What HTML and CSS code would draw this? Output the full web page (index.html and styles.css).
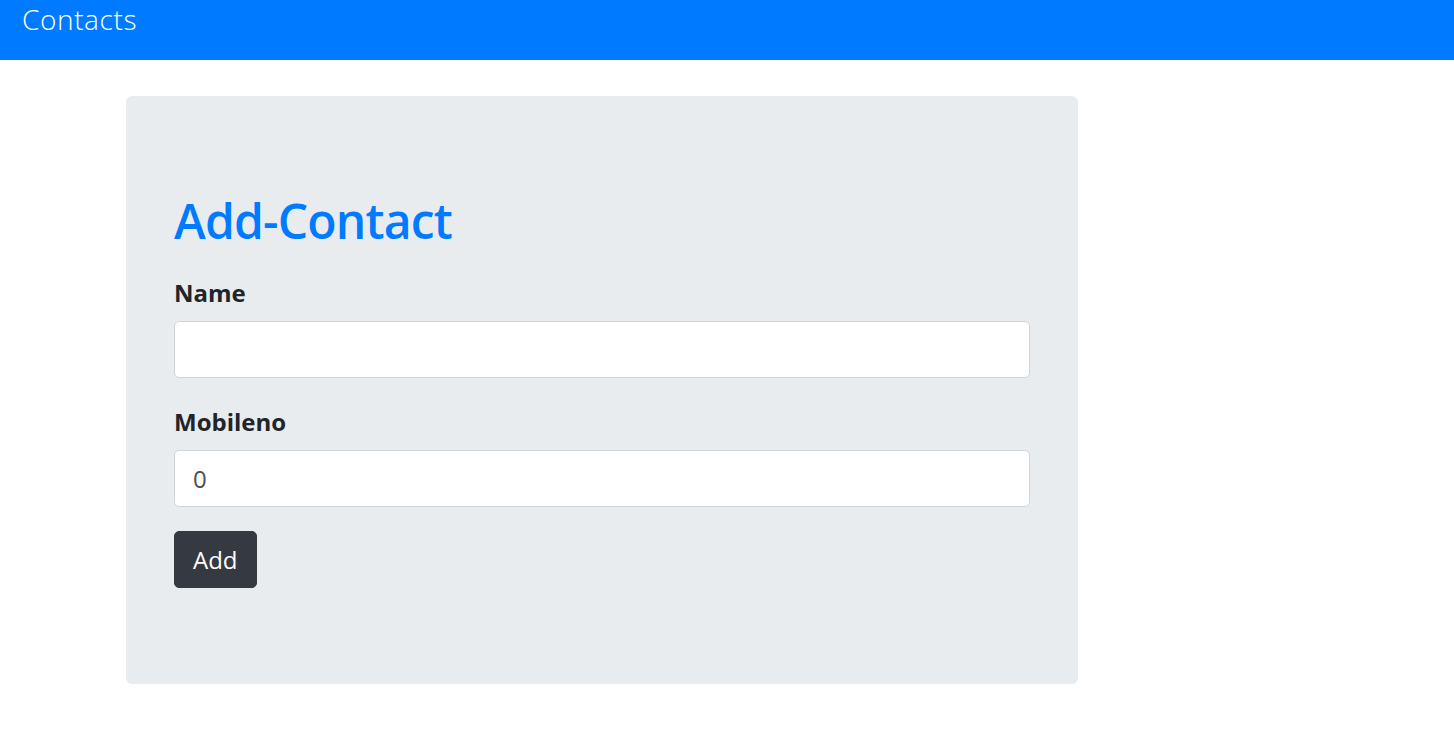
FILE: index.html
```html
<!DOCTYPE html>
<html lang="en">
<head>
<meta charset="utf-8">
<title>Contacts</title>
<link rel="stylesheet" href="styles.css">
</head>
<body>
<nav class="navbar">
  <span class="brand">Contacts</span>
</nav>
<main class="page">
  <section class="jumbotron">
    <h1 class="title">Add-Contact</h1>
    <form class="form">
      <div class="form-group">
        <label class="label" for="name">Name</label>
        <input class="control" id="name" type="text">
      </div>
      <div class="form-group">
        <label class="label" for="mobileno">Mobileno</label>
        <input class="control" id="mobileno" type="number" value="0">
      </div>
      <button class="btn" type="button">Add</button>
    </form>
  </section>
</main>
</body>
</html>
```

FILE: styles.css
```css
* { box-sizing: border-box; }

html, body {
  margin: 0;
  padding: 0;
  background: #fff;
  font-family: "Open Sans", "Noto Sans", "Liberation Sans", sans-serif;
  color: #212529;
}

.navbar {
  height: 60px;
  background: #007bff;
  padding: 0 0 0 22px;
}

.brand {
  display: block;
  color: #fff;
  font-size: 28px;
  font-weight: 300;
  line-height: 38px;
  letter-spacing: 0.6px;
}

.page {
  padding: 36px 0 0 126px;
}

.jumbotron {
  width: 952px;
  background: #e9ecef;
  border-radius: 6px;
  padding: 96px 48px;
}

.title {
  margin: 0 0 27px;
  color: #007bff;
  font-size: 48px;
  font-weight: 600;
  line-height: 58px;
  letter-spacing: -0.8px;
}

.form {
  display: flex;
  flex-direction: column;
  align-items: flex-start;
}

.form-group {
  display: flex;
  flex-direction: column;
  width: 100%;
  margin-bottom: 28px;
}

.form-group + .form-group {
  margin-bottom: 24px;
}

.label {
  font-size: 24px;
  font-weight: 700;
  line-height: 32px;
  margin-bottom: 12px;
  color: #212529;
}

.control {
  width: 100%;
  height: 57px;
  border: 1px solid #ced4da;
  border-radius: 5px;
  background: #fff;
  padding: 0 18px;
  font-family: inherit;
  font-size: 24px;
  line-height: 55px;
  color: #495057;
  outline: none;
  -moz-appearance: textfield;
}

.control::-webkit-inner-spin-button,
.control::-webkit-outer-spin-button {
  -webkit-appearance: none;
  margin: 0;
}

.btn {
  height: 57px;
  padding: 0 18px;
  border: 1px solid #343a40;
  border-radius: 5px;
  background: #343a40;
  color: #fff;
  font-family: inherit;
  font-size: 24px;
  font-weight: 400;
  line-height: 55px;
  cursor: pointer;
}
```
